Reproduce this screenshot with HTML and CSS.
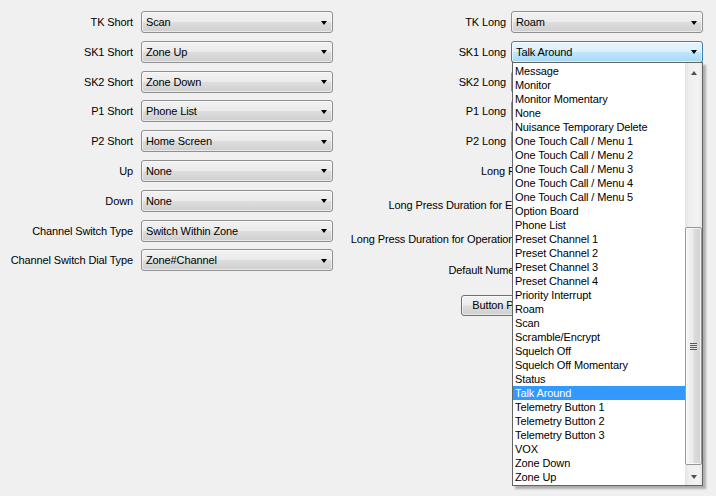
FILE: index.html
```html
<!DOCTYPE html>
<html>
<head>
<meta charset="utf-8">
<link rel="stylesheet" href="styles.css">
</head>
<body>
<div class="page">
  <div class="col col-left">
    <div class="row"><span class="label">TK Short</span><div class="combo"><span class="val">Scan</span><span class="arrow"></span></div></div>
    <div class="row"><span class="label">SK1 Short</span><div class="combo"><span class="val">Zone Up</span><span class="arrow"></span></div></div>
    <div class="row"><span class="label">SK2 Short</span><div class="combo"><span class="val">Zone Down</span><span class="arrow"></span></div></div>
    <div class="row"><span class="label">P1 Short</span><div class="combo"><span class="val">Phone List</span><span class="arrow"></span></div></div>
    <div class="row"><span class="label">P2 Short</span><div class="combo"><span class="val">Home Screen</span><span class="arrow"></span></div></div>
    <div class="row"><span class="label">Up</span><div class="combo"><span class="val">None</span><span class="arrow"></span></div></div>
    <div class="row"><span class="label">Down</span><div class="combo"><span class="val">None</span><span class="arrow"></span></div></div>
    <div class="row"><span class="label">Channel Switch Type</span><div class="combo"><span class="val">Switch Within Zone</span><span class="arrow"></span></div></div>
    <div class="row"><span class="label">Channel Switch Dial Type</span><div class="combo"><span class="val">Zone#Channel</span><span class="arrow"></span></div></div>
  </div>
  <div class="col col-right">
    <div class="row"><span class="label label-r">TK Long</span><div class="combo"><span class="val">Roam</span><span class="arrow"></span></div></div>
    <div class="row"><span class="label label-r">SK1 Long</span><div class="combo focused"><span class="val">Talk Around</span><span class="arrow"></span></div></div>
    <div class="row"><span class="label label-r">SK2 Long</span><div class="combo"><span class="val"></span><span class="arrow"></span></div></div>
    <div class="row"><span class="label label-r">P1 Long</span><div class="combo"><span class="val"></span><span class="arrow"></span></div></div>
    <div class="row"><span class="label label-r">P2 Long</span><div class="combo"><span class="val"></span><span class="arrow"></span></div></div>
    <div class="row"><span class="label label-r">Long Press Duration</span><div class="spin spin-d"></div></div>
    <div class="row gap-l"><span class="label label-r">Long Press Duration for Emergency Key</span><div class="spin spin-a"></div></div>
    <div class="row gap-l"><span class="label label-r">Long Press Duration for Operation Key Lock (ms)</span><div class="spin spin-c"></div></div>
    <div class="row gap-s"><span class="label label-r">Default Numeric Keypad</span><div class="spin spin-b"></div></div>
    <div class="row gap-b"><button class="btn">Button Programming</button></div>
  </div>
</div>

<div class="dropdown">
  <ul class="items">
    <li>Message</li>
    <li>Monitor</li>
    <li>Monitor Momentary</li>
    <li>None</li>
    <li>Nuisance Temporary Delete</li>
    <li>One Touch Call / Menu 1</li>
    <li>One Touch Call / Menu 2</li>
    <li>One Touch Call / Menu 3</li>
    <li>One Touch Call / Menu 4</li>
    <li>One Touch Call / Menu 5</li>
    <li>Option Board</li>
    <li>Phone List</li>
    <li>Preset Channel 1</li>
    <li>Preset Channel 2</li>
    <li>Preset Channel 3</li>
    <li>Preset Channel 4</li>
    <li>Priority Interrupt</li>
    <li>Roam</li>
    <li>Scan</li>
    <li>Scramble/Encrypt</li>
    <li>Squelch Off</li>
    <li>Squelch Off Momentary</li>
    <li>Status</li>
    <li class="sel">Talk Around</li>
    <li>Telemetry Button 1</li>
    <li>Telemetry Button 2</li>
    <li>Telemetry Button 3</li>
    <li>VOX</li>
    <li>Zone Down</li>
    <li>Zone Up</li>
  </ul>
  <div class="vscroll">
    <div class="sbtn"><span class="tri-up"></span></div>
    <div class="track">
      <div class="thumb"><span class="grip"></span></div>
    </div>
    <div class="sbtn"><span class="tri-down"></span></div>
  </div>
</div>
</body>
</html>
```
FILE: styles.css
```css
html, body {
  margin: 0;
  padding: 0;
  background: #f0f0f0;
  font-family: "Liberation Sans", Arial, sans-serif;
  font-size: 11px;
  letter-spacing: -0.12px;
  color: #000;
}

.page {
  display: flex;
  padding-top: 11px;
}

.col {
  display: flex;
  flex-direction: column;
  gap: 7.8px;
}

.col-left {
  width: 333px;
  flex: none;
}

.col-right {
  width: 370px;
  flex: none;
}

.row {
  display: flex;
  justify-content: flex-end;
  align-items: center;
  height: 22px;
}

.gap-l { margin-top: 4.2px; }
.gap-s { margin-top: 1.2px; }
.gap-b { margin-top: 6px; height: 21px; }

.label {
  margin-right: 8px;
  white-space: nowrap;
}

.label-r {
  margin-right: 5px;
}

.combo {
  box-sizing: border-box;
  width: 192px;
  height: 22px;
  border: 1px solid #8e8f8f;
  border-radius: 3px;
  background: linear-gradient(#f2f2f2 0%, #ebebeb 48%, #dddddd 52%, #cfcfcf 100%);
  box-shadow: inset 0 0 0 1px rgba(255, 255, 255, 0.55);
  display: flex;
  align-items: center;
  padding-left: 4px;
}

.combo.focused {
  border-color: #3c7fb1;
  background: linear-gradient(#eaf6fd 0%, #d9f0fc 48%, #bee6fd 52%, #a7d9f5 100%);
}

.val {
  flex: 1;
  white-space: nowrap;
}

.arrow {
  width: 0;
  height: 0;
  border-top: 4px solid #000;
  border-left: 3.5px solid transparent;
  border-right: 3.5px solid transparent;
  margin-right: 5px;
  margin-top: 1px;
}

.spin {
  box-sizing: border-box;
  height: 22px;
  border: 1px solid #abadb3;
  background: #fff;
}

.spin-a { width: 117px; }
.spin-b { width: 133px; }
.spin-c { width: 112px; }
.spin-d { width: 119px; }

.btn {
  font-family: "Liberation Sans", Arial, sans-serif;
  font-size: 11px;
  letter-spacing: -0.12px;
  height: 21px;
  padding: 0 10px;
  border: 1px solid #707070;
  border-radius: 3px;
  background: linear-gradient(#f2f2f2 0%, #ebebeb 48%, #dddddd 52%, #cfcfcf 100%);
  box-shadow: inset 0 0 0 1px rgba(255, 255, 255, 0.55);
  margin-right: 121px;
  color: #000;
}

/* open dropdown list */
.dropdown {
  position: absolute;
  left: 512px;
  top: 62px;
  width: 191px;
  height: 424px;
  box-sizing: border-box;
  border: 1px solid #646464;
  background: #fff;
  display: flex;
  box-shadow: 3px 3px 2px rgba(0, 0, 0, 0.28);
}

.items {
  list-style: none;
  margin: 0;
  padding: 1px 0 0 0;
  flex: 1;
}

.items li {
  height: 14px;
  line-height: 14px;
  padding-left: 2px;
  white-space: nowrap;
  overflow: hidden;
}

.items li.sel {
  background: #3399ff;
  color: #fff;
}

.vscroll {
  width: 17px;
  flex: none;
  display: flex;
  flex-direction: column;
  background: linear-gradient(to right, #e3e3e3, #eeeeee 20%, #f3f3f3 80%, #e6e6e6);
}

.sbtn {
  height: 17px;
  flex: none;
  display: flex;
  align-items: center;
  justify-content: center;
}

.tri-up {
  width: 0;
  height: 0;
  border-bottom: 4px solid #4d5157;
  border-left: 3.5px solid transparent;
  border-right: 3.5px solid transparent;
  margin-top: 2px;
}

.tri-down {
  width: 0;
  height: 0;
  border-top: 4px solid #4d5157;
  border-left: 3.5px solid transparent;
  border-right: 3.5px solid transparent;
}

.track {
  flex: 1;
  display: flex;
  flex-direction: column;
  padding-top: 147px;
  padding-bottom: 3px;
}

.thumb {
  flex: 1;
  box-sizing: border-box;
  border: 1px solid #979797;
  border-radius: 2px;
  background: linear-gradient(to right, #f4f4f4, #ececec 45%, #dcdcdc 55%, #d2d2d2);
  box-shadow: inset 0 0 0 1px rgba(255, 255, 255, 0.7);
  display: flex;
  align-items: center;
  justify-content: center;
}

.grip {
  width: 7px;
  height: 7px;
  background: repeating-linear-gradient(#555a60 0, #555a60 1px, #e8e8e8 1px, #e8e8e8 2px);
}
```
